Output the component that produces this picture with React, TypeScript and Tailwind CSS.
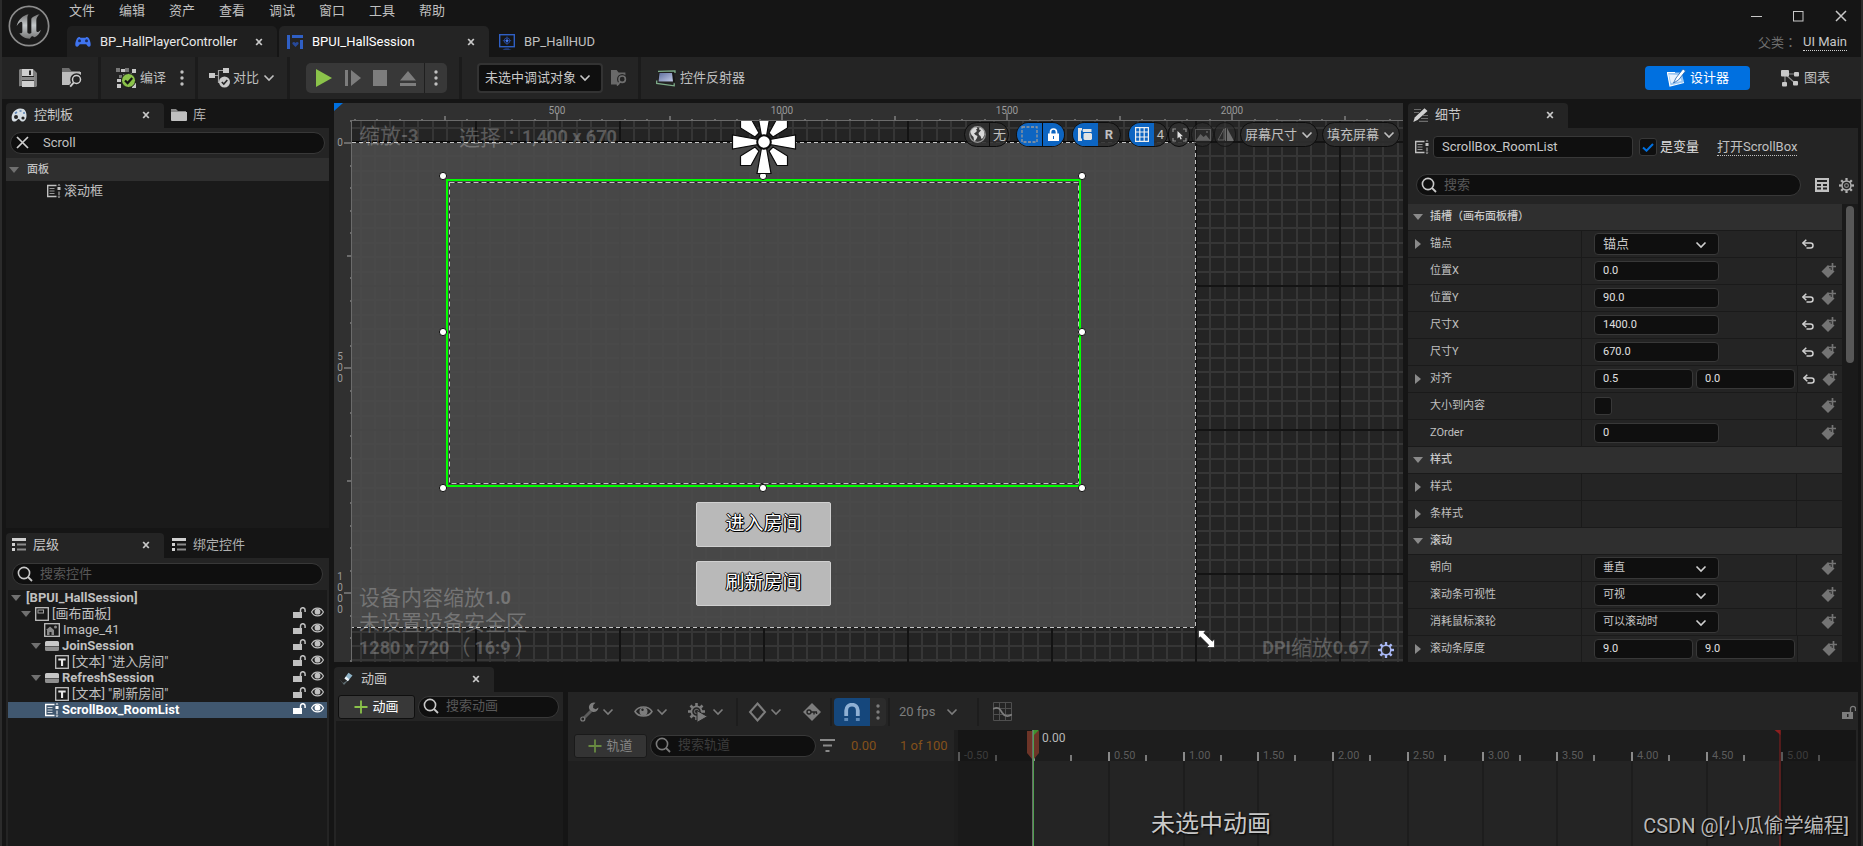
import React from 'react';

type IconProps = { w: number; h: number; vb?: string; className?: string; children: React.ReactNode };

function Icon({ w, h, vb, className = '', children }: IconProps) {
  return (
    <svg width={w} height={h} viewBox={vb ?? `0 0 ${w} ${h}`} className={`shrink-0 ${className}`} fill="none" aria-hidden="true">
      {children}
    </svg>
  );
}

/* ---------- icons ---------- */

const Chevron = ({ className = '' }: { className?: string }) => (
  <Icon w={12} h={8} className={className}>
    <path d="M1.500 1.500 6 6 10.500 1.500" stroke="currentColor" strokeWidth="1.600" />
  </Icon>
);

const Cross = ({ className = '' }: { className?: string }) => (
  <Icon w={8} h={8} className={className}>
    <path d="M1.200 1 6.800 7M6.800 1 1.200 7" stroke="currentColor" strokeWidth="1.800" />
  </Icon>
);

const SearchIcon = ({ className = '' }: { className?: string }) => (
  <Icon w={16} h={16} className={className}>
    <circle cx="7" cy="7" r="5.600" stroke="currentColor" strokeWidth="1.600" />
    <path d="m11 11 4 4" stroke="currentColor" strokeWidth="1.800" />
  </Icon>
);

const Dots = ({ className = '' }: { className?: string }) => (
  <Icon w={4} h={18} className={className}>
    <circle cx="2" cy="3" r="1.700" fill="currentColor" />
    <circle cx="2" cy="9" r="1.700" fill="currentColor" />
    <circle cx="2" cy="15" r="1.700" fill="currentColor" />
  </Icon>
);

const Plus = ({ className = '' }: { className?: string }) => (
  <Icon w={14} h={14} className={className}>
    <path d="M7 .5v13M.5 7h13" stroke="#8bc34a" strokeWidth="1.800" />
  </Icon>
);

const ArrowDown = ({ className = '' }: { className?: string }) => (
  <Icon w={10} h={6} className={className}>
    <path d="M0 0h10L5 6z" fill="currentColor" />
  </Icon>
);

const ArrowRight = ({ className = '' }: { className?: string }) => (
  <Icon w={6} h={10} className={className}>
    <path d="M0 0v10l6-5z" fill="currentColor" />
  </Icon>
);

const EngineLogo = () => (
  <Icon w={42} h={42} vb="0 0 126 126">
    <defs>
      <linearGradient id="metal" x1="0" y1="0" x2="0" y2="1">
        <stop offset="0" stopColor="#777" />
        <stop offset=".45" stopColor="#c4c8ca" />
        <stop offset="1" stopColor="#777" />
      </linearGradient>
    </defs>
    <circle cx="63" cy="63" r="59" fill="#1b1b1b" stroke="#8c8c8c" strokeWidth="5" />
    <g transform="translate(-26 -13)">
      <path
        fill="url(#metal)"
        d="M88 41C70 45 57 57 52 76C58 66 63 63 66 63C68 63 69 65 69 69V93C69 98 64 99 60 97C66 107 77 114 91 114L98 106L106 110C115 105 122 97 125 87C121 92 117 94 114 94C112 94 111 92 111 89V58C111 51 117 45 121 41C112 43 103 47 97 52C96 54 96 56 96 58V97C92 100 84 100 84 93V52C84 47 86 43 88 41Z"
      />
    </g>
  </Icon>
);

const GamepadIcon = () => (
  <Icon w={16} h={12}>
    <path d="M4 1C2 1 .3 5.500 .3 8.800.3 11 2.600 11.500 3.800 9.600L4.800 8.200H11.200L12.200 9.600C13.400 11.500 15.700 11 15.700 8.800 15.700 5.500 14 1 12 1 11 1 10.600 1.800 9.800 1.800H6.200C5.400 1.800 5 1 4 1Z" fill="#3f74f0" />
    <circle cx="4.500" cy="4.800" r="1.500" fill="#1b2c5a" />
    <circle cx="11.500" cy="4.800" r="1.500" fill="#1b2c5a" />
  </Icon>
);

const WidgetIcon = () => (
  <Icon w={16} h={14}>
    <path d="M0 0h3v14H0zM5 0h11v3H5zM13 5h3v9h-3z" fill="#2f5fc4" />
    <path d="M8.500 12 5.500 9c-.8-1.600 1.600-3 3-1 1.400-2 3.800-.6 3 1z" fill="#27499a" />
  </Icon>
);

const HudIcon = () => (
  <Icon w={16} h={16}>
    <rect x=".7" y=".7" width="14.600" height="12" stroke="#2f5fc4" strokeWidth="1.400" />
    <circle cx="8" cy="6.700" r="2.800" stroke="#27499a" />
    <path d="M8 2.500v8.400M3.800 6.700h8.400" stroke="#27499a" />
    <circle cx="8" cy="6.700" r="1.200" fill="#4a7cf0" />
    <path d="M3.500 15.800c2-1.600 7-1.600 9 0z" fill="#27499a" />
  </Icon>
);

const SaveIcon = () => (
  <Icon w={18} h={18}>
    <path d="M1 0h13l4 4v13l-1 1H1l-1-1V1z" fill="#7e7e7e" />
    <path d="M3 0h11v7H3zM3 12h12v6H3z" fill="#cfcfcf" />
    <path d="M10 1.500h2V6h-2z" fill="#242424" />
    <path d="M2 7.500h14v3.500H2z" fill="#8a8a8a" />
    <path d="M0 17h3v1H1zM3 7h12v1H3zM3 11.300h12v.7H3z" fill="#242424" />
  </Icon>
);

const BrowseIcon = () => (
  <Icon w={20} h={20}>
    <path d="M0 0h7l2.500 3H18v3H0z" fill="#6e6e6e" />
    <path d="M0 4h19v9l-8 4H0z" fill="#bdbdbd" />
    <circle cx="14.500" cy="11.500" r="4.300" fill="#242424" stroke="#242424" strokeWidth="4" />
    <path d="m11.500 15-3.500 4" stroke="#242424" strokeWidth="4" />
    <circle cx="14.500" cy="11.500" r="4" stroke="#cfcfcf" strokeWidth="1.500" />
    <path d="m11.700 14.700-3.500 4" stroke="#cfcfcf" strokeWidth="1.800" />
  </Icon>
);

const CompileIcon = () => (
  <Icon w={20} h={20}>
    <path d="M5 1h4v3H5zM16 1h4v4h-4zM1 11h4v3H1zM1 16h4v4H1zM16 15h4v5h-4z" fill="#c6c6c6" />
    <path d="M0 0h4v4H0zM9 0h4v4H9zM7 6h4v3H7zM3 7h3v3H3zM12 5h4v3h-4z" fill="#777" />
    <circle cx="12.500" cy="12.500" r="7" fill="#8bc34a" stroke="#1a1a1a" />
    <path d="m9 12.500 2.600 2.600 4.600-5" stroke="#151515" strokeWidth="2.200" />
  </Icon>
);

const DiffIcon = () => (
  <Icon w={22} h={20}>
    <path d="M6 7.500h3.500V2.500H14M9.500 7.500v7H11" stroke="#a0a0a0" strokeWidth="1.200" />
    <path d="M0 5h6v5H0zM14 0h6v5h-6z" fill="#c8c8c8" />
    <circle cx="15.500" cy="14" r="5.500" fill="#c8c8c8" />
    <path d="m12.800 14 2 2 3.500-4" stroke="#242424" strokeWidth="1.600" />
  </Icon>
);

const ReflectorIcon = () => (
  <Icon w={20} h={17}>
    <defs>
      <linearGradient id="screen" x1="0" y1="0" x2="1" y2="1">
        <stop offset="0" stopColor="#5f6f9e" />
        <stop offset="1" stopColor="#c3cbe8" />
      </linearGradient>
    </defs>
    <path d="M2 1.300 19 .8V3M.7 10.500v3l17.500 2.300v-2.500" stroke="#7fae8a" strokeWidth="1.300" />
    <path d="M3 2.500h15l1 9.500H2z" fill="#161616" />
    <path d="M3.500 3h12.500l1 8.500H2.500z" fill="url(#screen)" />
  </Icon>
);

const DesignerIcon = () => (
  <Icon w={20} h={18}>
    <path d="M1 3.500h14.500L18 13 4 17z" fill="#9cc7f3" />
    <path d="M3 5.500 13 6l2.500 6L5 14z" fill="#e8f3ff" />
    <path d="M1 3.500h8M1.500 3.500 4 17l14-3.500" stroke="#fff" strokeWidth="1.200" />
    <path d="m17 0 2.500 2-7 9-5 3 2.500-5z" fill="#fff" stroke="#1c5fae" strokeWidth=".8" />
  </Icon>
);

const GraphIcon = () => (
  <Icon w={18} h={17}>
    <path d="M5 4h10M5 5l9 8M4 5v8" stroke="#8f8f8f" strokeWidth="1.200" />
    <rect width="8" height="6.500" rx="1" fill="#c8c8c8" />
    <rect x="13" y="2" width="5" height="4.500" rx="1" fill="#c8c8c8" />
    <rect x="1" y="12" width="5" height="4.500" rx="1" fill="#c8c8c8" />
    <rect x="12" y="11" width="5" height="4.500" rx="1" fill="#c8c8c8" />
  </Icon>
);

const PaletteIcon = () => (
  <Icon w={16} h={14}>
    <path d="M1 12C-.5 7 3 1 9 .5c5-.3 6.500 3.500 6.500 7C15.500 11 14 13.500 11.500 13.500S9 11 7.500 11 6 13.500 4 13.500 1.500 13 1 12Z" fill="#d5dde3" />
    <circle cx="5" cy="9" r="2" fill="#242424" />
    <circle cx="12" cy="10" r="1.600" fill="#242424" />
    <path d="M4 5.500 6 4M8.500 3h2M12 5h2" stroke="#5f87b8" strokeWidth="1.600" />
  </Icon>
);

const FolderIcon = () => (
  <Icon w={16} h={12}>
    <path d="M0 0h5l2 2h8v1H0z" fill="#8a8a8a" />
    <path d="M0 3h16v8a1 1 0 0 1-1 1H1a1 1 0 0 1-1-1z" fill="#c0c0c0" />
  </Icon>
);

const ListIcon = () => (
  <Icon w={15} h={13}>
    <path d="M1 0h14v3H1zM1 5h3v3H1zM1 10h3v3H1z" fill="#d0d0d0" />
    <path d="M6 5.500h9v2H6zM6 10.500h9v2H6z" fill="#8a8a8a" />
  </Icon>
);

const ScrollBoxIcon = () => (
  <Icon w={14} h={14}>
    <path d="M9.500 1.500H.7v11h8.800" stroke="currentColor" strokeWidth="1.400" />
    <path d="M2.500 4.500h5M2.500 7h5M2.500 9.500h5" stroke="currentColor" opacity=".75" />
    <path d="M12 0l1.500 1.500h-3zM12 14l1.500-1.500h-3zM10.500 3h3v3h-3zM11.500 7.500h1v4h-1z" fill="currentColor" />
  </Icon>
);

const PencilIcon = () => (
  <Icon w={15} h={14}>
    <path d="M1 1.500h7M1 4.500h5M10 7.500h5M8 10.500h7M6 13.300h9" stroke="#6c6c6c" strokeWidth="1.200" />
    <path d="m11.500.3 3 2.700L4.500 12 .3 14l1.400-4.500z" fill="#d0d0d0" />
  </Icon>
);

const AnimIcon = () => (
  <Icon w={15} h={14}>
    <path d="m0 6.500 4 4.500 6-3.500L5 13z" fill="#5d6b70" />
    <path d="m9.500.8 4 2.700L9 9 5.500 6.200z" fill="#8fb4c8" />
    <path d="m7 4.500 3.300 2.700-1.500 2L5.500 6.500z" fill="#f0f6fa" />
  </Icon>
);

const UnlockIcon = ({ className = '' }: { className?: string }) => (
  <Icon w={13} h={11} className={className}>
    <path d="M7.500 5V3a2.300 2.300 0 0 1 4.600 0v2" stroke="currentColor" strokeWidth="1.500" />
    <path d="M0 5h9v6H0z" fill="currentColor" />
  </Icon>
);

const EyeIcon = ({ className = '' }: { className?: string }) => (
  <Icon w={13} h={10} className={className}>
    <path d="M.6 5C3-.2 10-.2 12.400 5 10 10.200 3 10.200.6 5Z" stroke="currentColor" strokeWidth="1.200" />
    <circle cx="6.500" cy="4.700" r="2.900" fill="currentColor" />
  </Icon>
);

const CanvasIcon = () => (
  <Icon w={14} h={14}>
    <rect x=".7" y=".7" width="12.600" height="12.600" stroke="#c0c0c0" strokeWidth="1.300" />
    <rect x="3" y="3" width="5.500" height="3" stroke="#a0a0a0" />
  </Icon>
);

const ImageIcon = () => (
  <Icon w={16} h={14}>
    <rect x=".7" y=".7" width="14.600" height="12.600" stroke="#c0c0c0" strokeWidth="1.300" />
    <path d="M2 7l4-3.500L10 7v5H7.500V9h-2v3H3V7z" fill="#8a8a8a" />
    <circle cx="11.500" cy="4" r="1.500" fill="#8a8a8a" />
  </Icon>
);

const ButtonIcon = () => (
  <Icon w={14} h={10}>
    <path d="M1.500 0h11A1.500 1.500 0 0 1 14 1.500V5H0V1.500A1.500 1.500 0 0 1 1.500 0Z" fill="#c8c8c8" />
    <path d="M0 5.500h14v3a1.500 1.500 0 0 1-1.500 1.500h-11A1.500 1.500 0 0 1 0 8.500z" fill="#8f8f8f" />
  </Icon>
);

const TextIcon = () => (
  <Icon w={14} h={14}>
    <rect x=".7" y=".7" width="12.600" height="12.600" stroke="#c0c0c0" strokeWidth="1.300" />
    <path d="M3.300 3.500h7.400v2h-2.600V11H6V5.500H3.300z" fill="#e8e8e8" />
  </Icon>
);

const gearTeeth = [0, 45, 90, 135, 180, 225, 270, 315];

const GearIcon = ({ size = 15, className = '', hub = false }: { size?: number; className?: string; hub?: boolean }) => (
  <Icon w={size} h={size} vb="-8 -8 16 16" className={className}>
    {gearTeeth.map((a) => (
      <path key={a} d="M-1.200-8h2.400v3h-2.400z" fill="currentColor" transform={`rotate(${a})`} />
    ))}
    <circle r="4.800" stroke="currentColor" strokeWidth="1.600" />
    {hub && <circle r="2" stroke="currentColor" strokeWidth="1.200" opacity=".7" />}
  </Icon>
);

const ResetIcon = () => (
  <Icon w={12} h={10}>
    <path d="M4.300.8.900 4l3.400 3.200" stroke="#d0d0d0" strokeWidth="1.500" />
    <path d="M1 4h7.500a2.400 2.400 0 0 1 0 5H4.500" stroke="#d0d0d0" strokeWidth="1.500" />
  </Icon>
);

const AddKeyIcon = () => (
  <Icon w={15} h={15}>
    <path d="M7 2 13.500 8.500 7 15 .5 8.500z" fill="#747474" />
    <path d="M11.500 0v7M8 3.500h7" stroke="#242424" strokeWidth="3.500" />
    <path d="M11.500 0v7M8 3.500h7" stroke="#747474" strokeWidth="1.700" />
  </Icon>
);

/* ---------- shared controls ---------- */

function DockTab({ icon, label, width }: { icon: React.ReactNode; label: string; width: string }) {
  return (
    <div className={`flex h-[25px] items-center gap-[7px] rounded-t-[4px] bg-[#242424] pr-3.5 pb-0.5 pl-[5px] ${width}`}>
      {icon}
      <span className="flex-1 text-[#c8c8c8]">{label}</span>
      <button aria-label={`关闭${label}`} className="text-[#c8c8c8]">
        <Cross />
      </button>
    </div>
  );
}

function SearchBox({ id, label, className = '', dim = false }: { id: string; label: string; className?: string; dim?: boolean }) {
  return (
    <div className={`flex h-[22px] items-center gap-[7px] rounded-full border border-[#383838] bg-[#0f0f0f] pr-2 pb-px pl-1 ${className}`}>
      <label htmlFor={id} aria-label={label}>
        <SearchIcon className={dim ? 'text-[#7a7a7a]' : 'text-[#c8c8c8]'} />
      </label>
      <input
        id={id}
        placeholder={label}
        className={`w-full min-w-0 bg-transparent outline-none ${dim ? 'placeholder:text-[#3c3c3c]' : 'placeholder:text-[#585858]'}`}
      />
    </div>
  );
}

/* full-width colon with its dots in the middle of the cell */
const Colon = () => <span className="font-['Noto_Sans_CJK_TC',sans-serif]">：</span>;

/* ---------- title bar ---------- */

const menus = ['文件', '编辑', '资产', '查看', '调试', '窗口', '工具', '帮助'];

function DocTab({ icon, label, state, width }: { icon: React.ReactNode; label: string; state: 'active' | 'open' | 'plain'; width: string }) {
  const bg = state === 'active' ? 'bg-[#242424] text-white' : state === 'open' ? 'bg-[#1f1f1f] text-[#e8e8e8]' : 'text-[#c0c0c0]';
  return (
    <div className={`flex h-[31px] items-center gap-[9px] rounded-t-[5px] pr-3.5 pl-2 ${bg} ${width}`}>
      {icon}
      <span className="flex-1 whitespace-nowrap">{label}</span>
      {state !== 'plain' && (
        <button aria-label={`关闭${label}`} className="text-[#c8c8c8]">
          <Cross />
        </button>
      )}
    </div>
  );
}

function TitleBar() {
  return (
    <header className="flex h-[57px] shrink-0 bg-[#151515]">
      <div className="w-[65px] shrink-0 pt-[5px] pl-[6px]">
        <EngineLogo />
      </div>
      <div className="flex flex-1 flex-col justify-between">
        <nav className="flex gap-6 pt-0.5 pl-0.5 leading-[18px] text-[#c0c0c0]">
          {menus.map((m) => (
            <button key={m}>{m}</button>
          ))}
        </nav>
        <div className="flex gap-0.5">
          <DocTab icon={<GamepadIcon />} label="BP_HallPlayerController" state="open" width="w-[210px]" />
          <DocTab icon={<WidgetIcon />} label="BPUI_HallSession" state="active" width="w-[210px]" />
          <DocTab icon={<HudIcon />} label="BP_HallHUD" state="plain" width="w-[140px]" />
        </div>
      </div>
      <div className="flex flex-col items-end justify-between pt-[10px] pr-3.5 pb-[6px]">
        <div className="flex items-center gap-[31px] text-[#c8c8c8]">
          <button aria-label="最小化">
            <Icon w={11} h={12}>
              <path d="M0 6.500h11" stroke="currentColor" />
            </Icon>
          </button>
          <button aria-label="最大化">
            <Icon w={11} h={12}>
              <rect x=".5" y="1.500" width="9.500" height="9.500" stroke="currentColor" />
            </Icon>
          </button>
          <button aria-label="关闭">
            <Icon w={12} h={12}>
              <path d="m1 1 10 10M11 1 1 11" stroke="currentColor" strokeWidth="1.500" />
            </Icon>
          </button>
        </div>
        <div className="flex items-center gap-[6px] leading-[17px]">
          <span className="text-[#6e6e6e]">
            父类
            <Colon />
          </span>
          <a href="#parent" className="border-b border-dotted border-[#d0d0d0] leading-4 text-[#c8c8c8]">
            UI Main
          </a>
        </div>
      </div>
    </header>
  );
}

/* ---------- tool bar ---------- */

function ToolBar() {
  const group = 'flex h-full items-center border-r-[3px] border-[#1b1b1b]';
  return (
    <div className="flex h-[42px] shrink-0 items-center bg-[#242424] text-[#c0c0c0]">
      <div className={`${group} gap-[25px] pr-4 pl-[17px]`}>
        <button aria-label="保存">
          <SaveIcon />
        </button>
        <button aria-label="浏览">
          <BrowseIcon />
        </button>
      </div>
      <div className={`${group} gap-[14px] pr-[11px] pl-[15px]`}>
        <button className="flex items-center gap-1">
          <CompileIcon />
          编译
        </button>
        <button aria-label="编译选项">
          <Dots />
        </button>
      </div>
      <div className={`${group} pr-3 pl-[11px]`}>
        <button className="flex items-center gap-0.5">
          <DiffIcon />
          对比
          <Chevron className="ml-0.5" />
        </button>
      </div>
      <div className={`${group} pr-3 pl-4`}>
        <div className="flex h-[30px] items-center rounded-[5px] bg-[#383838]">
          <button aria-label="运行" className="pr-[13px] pl-2.5">
            <Icon w={16} h={18}>
              <path d="M0 0v18l16-9z" fill="#8bc34a" />
            </Icon>
          </button>
          <button aria-label="逐帧" className="pr-3">
            <Icon w={16} h={16}>
              <path d="M0 0h3v16H0zM6 0v16l10-8z" fill="#7d7d7d" />
            </Icon>
          </button>
          <button aria-label="停止" className="pr-3">
            <Icon w={15} h={16}>
              <path d="M0 0h14v16H0z" fill="#7d7d7d" />
            </Icon>
          </button>
          <button aria-label="弹出" className="pr-2">
            <Icon w={16} h={15}>
              <path d="m8 0 8 9.500H0zM0 12h16v3H0z" fill="#7d7d7d" />
            </Icon>
          </button>
          <button aria-label="运行选项" className="flex h-full items-center border-l border-[#1f1f1f] px-[9px]">
            <Dots />
          </button>
        </div>
      </div>
      <div className={`${group} gap-2 pr-[11px] pl-[15px]`}>
        <div className="relative">
          <select
            aria-label="调试对象"
            className="h-[30px] w-[126px] appearance-none rounded-[4px] border-2 border-[#333] bg-[#0f0f0f] pr-5 pl-[6px] text-[#c8c8c8]"
          >
            <option>未选中调试对象</option>
          </select>
          <Chevron className="pointer-events-none absolute top-[11px] right-3 text-[#c8c8c8]" />
        </div>
        <button aria-label="查找" className="opacity-40">
          <Icon w={16} h={16} vb="0 0 20 20">
            <path d="M0 0h7l2.500 3H18v10l-8 5H0z" fill="#d0d0d0" />
            <circle cx="14" cy="11.500" r="4" fill="#242424" stroke="#242424" strokeWidth="5" />
            <circle cx="14" cy="11.500" r="4" stroke="#e0e0e0" strokeWidth="2" />
            <path d="m11 15-3.500 4.500" stroke="#e0e0e0" strokeWidth="2" />
          </Icon>
        </button>
      </div>
      <button className="flex items-center gap-1 pl-[15px]">
        <ReflectorIcon />
        控件反射器
      </button>
      <div className="flex-1" />
      <button className="flex h-6 w-[105px] items-center justify-center gap-1 rounded-[4px] bg-[#0070e0] text-white">
        <DesignerIcon />
        设计器
      </button>
      <button className="flex items-center gap-[5px] pr-[31px] pl-[31px]">
        <GraphIcon />
        图表
      </button>
    </div>
  );
}

/* ---------- left column ---------- */

function PalettePanel() {
  return (
    <section className="flex min-h-0 flex-1 flex-col">
      <div className="flex items-center">
        <DockTab icon={<PaletteIcon />} label="控制板" width="w-[158px]" />
        <button className="flex items-center gap-[6px] pb-0.5 pl-[7px] text-[#b0b0b0]">
          <FolderIcon />库
        </button>
      </div>
      <div className="bg-[#242424] p-1">
        <div className="flex h-[22px] items-center rounded-full border border-[#383838] bg-[#0f0f0f] pb-px pl-[5px]">
          <button aria-label="清除" className="text-[#d0d0d0]">
            <Icon w={13} h={13}>
              <path d="m1 1 11 11M12 1 1 12" stroke="currentColor" strokeWidth="1.700" />
            </Icon>
          </button>
          <input aria-label="搜索面板" defaultValue="Scroll" className="w-full bg-transparent pl-[14px] text-[#c0c0c0] outline-none" />
        </div>
      </div>
      <div className="flex-1 bg-[#1a1a1a]">
        <button className="flex h-[23px] w-full items-center gap-2 bg-[#2f2f2f] pl-[3px] text-[11px] font-medium text-[#c0c0c0]">
          <ArrowDown className="text-[#707070]" />
          面板
        </button>
        <div className="flex h-5 items-center gap-[3px] pl-[41px] text-[#c0c0c0]">
          <ScrollBoxIcon />
          滚动框
        </div>
      </div>
    </section>
  );
}

type TreeRow = { pad: string; arrow?: boolean; icon?: React.ReactNode; label: string; bold?: boolean; root?: boolean; selected?: boolean };

const tree: TreeRow[] = [
  { pad: 'pl-[3px]', arrow: true, label: '[BPUI_HallSession]', bold: true, root: true },
  { pad: 'pl-[13px]', arrow: true, icon: <CanvasIcon />, label: '[画布面板]' },
  { pad: 'pl-[36px]', icon: <ImageIcon />, label: 'Image_41' },
  { pad: 'pl-[23px]', arrow: true, icon: <ButtonIcon />, label: 'JoinSession', bold: true },
  { pad: 'pl-[47px]', icon: <TextIcon />, label: '[文本] "进入房间"' },
  { pad: 'pl-[23px]', arrow: true, icon: <ButtonIcon />, label: 'RefreshSession', bold: true },
  { pad: 'pl-[47px]', icon: <TextIcon />, label: '[文本] "刷新房间"' },
  { pad: 'pl-[37px]', icon: <ScrollBoxIcon />, label: 'ScrollBox_RoomList', bold: true, selected: true },
];

function HierarchyPanel() {
  return (
    <section className="flex h-[313px] shrink-0 flex-col">
      <div className="flex items-center">
        <DockTab icon={<ListIcon />} label="层级" width="w-[158px]" />
        <button className="flex items-center gap-[7px] pb-0.5 pl-[7px] text-[#b0b0b0]">
          <ListIcon />
          绑定控件
        </button>
      </div>
      <div className="flex flex-1 flex-col bg-[#242424] px-0.5">
        <SearchBox id="widget-search" label="搜索控件" className="mx-1 my-[5px]" />
        <ul className="flex-1 bg-[#1a1a1a]">
          {tree.map((r) => (
            <li
              key={r.label}
              className={`flex h-4 items-center pr-[3px] leading-4 ${r.pad} ${r.selected ? 'bg-[#40576f] text-white' : 'text-[#c0c0c0]'}`}
            >
              {r.arrow && <ArrowDown className={`text-[#707070] ${r.root ? 'mr-[5px]' : 'mr-1'}`} />}
              {r.icon}
              <span className={`flex-1 whitespace-nowrap ${r.root ? '' : 'ml-[3px]'} ${r.bold ? 'font-bold' : ''}`}>{r.label}</span>
              {!r.root && (
                <span className="flex items-center gap-[5px] pb-1">
                  <button aria-label={`锁定${r.label}`}>
                    <UnlockIcon />
                  </button>
                  <button aria-label={`${r.label}可见性`}>
                    <EyeIcon />
                  </button>
                </span>
              )}
            </li>
          ))}
        </ul>
      </div>
    </section>
  );
}

/* ---------- designer surface ---------- */

const SCALE = 0.45;
const ORIGIN_X = -2;
const ORIGIN_Y = 39;
const unitX = (u: number) => ORIGIN_X + u * SCALE;
const unitY = (u: number) => ORIGIN_Y + u * SCALE;
const ticksX = Array.from({ length: 110 }, (_, i) => (i + 1) * 50);
const ticksY = Array.from({ length: 60 }, (_, i) => (i - 1) * 50);
const minorLines = Array.from({ length: 9 }, (_, i) => Math.round((i + 1) * 14.4));
const handles = [
  [109, 73],
  [429, 73],
  [748, 73],
  [109, 229],
  [748, 229],
  [109, 385],
  [429, 385],
  [748, 385],
];

function tickLength(u: number) {
  if (u % 500 === 0) return 8;
  return u % 250 === 0 ? 5 : 2;
}

function DesignSurface() {
  return (
    <svg className="absolute inset-0 h-full w-full" aria-label="画布">
      <defs>
        <pattern id="grid" x={ORIGIN_X - 1} y={ORIGIN_Y - 1} width="144" height="144" patternUnits="userSpaceOnUse">
          <rect width="144" height="144" fill="#242424" />
          {minorLines.map((m) => (
            <path key={m} d={`M${m} 0h2v144h-2zM0 ${m}h144v2H0z`} fill="#363636" />
          ))}
          <path d="M0 0h144v2H0zM0 0h2v144H0z" fill="#131313" />
        </pattern>
      </defs>
      <rect width="100%" height="100%" fill="url(#grid)" />
      <rect x="18" y="39" width="844" height="486" fill="#4b4b4b" fillOpacity=".92" />
      <path d="M18 38.500h844" stroke="#050505" />
      <path d="M18 39.500H861.500V524.500H18" stroke="#1a1a1a" fill="none" />
      <path d="M18 39.500H861.500V524.500H18" stroke="#c4c4c4" strokeDasharray="4 3" fill="none" />

      <rect x="115.500" y="79.500" width="629" height="301" stroke="#1d1d1d" fill="none" />
      <rect x="115.500" y="79.500" width="629" height="301" stroke="#c4c4c4" strokeDasharray="5 3" fill="none" />
      <rect x="113" y="77" width="633" height="306" stroke="#00ff00" strokeWidth="2" fill="none" />

      {handles.map(([x, y]) => (
        <circle key={`${x}-${y}`} cx={x} cy={y} r="3.600" fill="#fff" stroke="#111" />
      ))}

      <g transform="translate(430 39)" fill="#fff" stroke="#0a0a0a" strokeWidth="1.200">
        {[0, 90, 180, 270].map((a) => (
          <g key={a} transform={`rotate(${a})`}>
            <path d="M-2.500 6h5L7 31.500H-7z" />
          </g>
        ))}
        {['scale(1 1)', 'scale(-1 1)', 'scale(1 -1)', 'scale(-1 -1)'].map((t) => (
          <path key={t} d="M-9 5-23.500 14v9.500h10.500L-5 9z" transform={t} />
        ))}
        <circle r="6.800" strokeWidth="2" />
      </g>

      <path
        d="M864.500 527.500h7.500l-2.300 2.300 8.500 8.500 2.300-2.300v8.500h-8l2.300-2.300-8.500-8.500-1.800 1.800z"
        stroke="#111"
        strokeWidth=".6"
        fill="#fff"
      />

      <rect width="100%" height="18" fill="#303030" />
      <rect width="18" height="100%" fill="#303030" />
      <path d="M0 0h9L0 8z" fill="#0070e0" />
      <g fill="#6b6b6b">
        <rect x="18" y="17" width="100%" height="1" />
        <rect x="17" y="18" width="1" height="100%" />
        {ticksX.map((u) => (
          <rect key={u} x={Math.round(unitX(u)) - 1} y={18 - tickLength(u)} width="2" height={tickLength(u)} />
        ))}
        {ticksY.map((u) => (
          <rect key={u} x={18 - tickLength(u)} y={Math.round(unitY(u))} width={tickLength(u)} height="2" />
        ))}
      </g>
      <g fill="#9a9a9a" fontSize="10" textAnchor="middle">
        {[500, 1000, 1500, 2000].map((u) => (
          <text key={u} x={Math.round(unitX(u))} y="11">
            {u}
          </text>
        ))}
        {[0, 500, 1000].map((u) => {
          const digits = String(u).split('');
          return digits.map((d, i) => (
            <text key={`${u}-${i}`} x="6" y={Math.round(unitY(u) + 4 + (i - (digits.length - 1) / 2) * 11)}>
              {d}
            </text>
          ));
        })}
      </g>
    </svg>
  );
}

const pill = 'flex h-[25px] items-center justify-center overflow-hidden rounded-full border border-[#0d0d0d] bg-[#303030]/90 text-[#c0c0c0]';

function ViewportBar() {
  return (
    <div className="absolute top-[19px] right-[3px] flex items-center gap-1">
      <div className="flex items-center">
        <div className={`${pill} w-[45px]`}>
          <button aria-label="本地化预览" className="flex h-full flex-1 items-center justify-center">
            <Icon w={17} h={17}>
              <circle cx="8.500" cy="8.500" r="7.800" fill="#3a3a3a" stroke="#8f8f8f" strokeWidth="1.200" />
              <path
                d="M1.500 6C2.500 3 5 1.300 7.500 1.200l1 1.300-1.500 1 1 1.500-1.500 1.500L5 7.500l1.500 1.500 2 1-.5 2-2 3L5 14.500 4.500 11 2.500 9zM10.500 1.500c2 .6 3.700 2 4.500 4l.5 3-1.500 3.500-1.500 1-1-3-1.500-1-.5-2 1.500-1.500 1-1.500-2-.5z"
                fill="#d8d8d8"
              />
            </Icon>
          </button>
          <span className="flex h-full w-[19px] items-center border-l border-[#0d0d0d] pl-[3px]">无</span>
        </div>
        <div className={`${pill} ml-[7px] w-[49px]`}>
          <button aria-label="显示轮廓" className="flex h-full w-[25px] items-center justify-center bg-[#0d65c2]">
            <Icon w={17} h={17}>
              <rect x="1" y="1" width="15" height="15" stroke="#9a9a9a" strokeWidth="1.300" strokeDasharray="3 1.500" />
            </Icon>
          </button>
          <button aria-label="遵循锁定" className="flex h-full flex-1 items-center justify-center border-l border-[#0d0d0d] bg-[#0d65c2] text-white">
            <Icon w={11} h={13}>
              <path d="M2.500 6V4a3 3 0 0 1 6 0v2" stroke="currentColor" strokeWidth="1.700" />
              <path d="M0 5.500h11V13H0z" fill="currentColor" />
              <path d="M5 8h1v3H5z" fill="#0d65c2" />
            </Icon>
          </button>
        </div>
        <div className={`${pill} ml-[7px] w-[49px]`}>
          <button aria-label="布局变换" className="flex h-full w-[25px] items-center justify-center bg-[#0d65c2]">
            <Icon w={15} h={13}>
              <path d="M0 0h4v2L3 3v7l1 1v2H0z" fill="#e4e4e4" />
              <path d="M5 1h8.500v3H5L4.500 2.500zM6.500 5H13l1 1v5l-1 1H6.500l-1-1V6z" fill="#e4e4e4" />
            </Icon>
          </button>
          <button className="h-full flex-1 font-bold">R</button>
        </div>
        <div className={`${pill} ml-[7px] w-[40px]`}>
          <button aria-label="网格对齐" className="flex h-full w-[25px] items-center justify-center bg-[#0d65c2]">
            <Icon w={14} h={15}>
              <path d="M.6.6h12.800v13.800H.6zM4.800 0v15M9.200 0v15M0 5h14M0 10h14" stroke="#f0f0f0" strokeWidth="1.200" />
            </Icon>
          </button>
          <button className="h-full flex-1">4</button>
        </div>
        <button aria-label="缩放到选中项" className={`${pill} w-[22px]`}>
          <Icon w={15} h={14}>
            <path d="M1 4V1h3M11 1h3v3M14 10v3h-3M4 13H1v-3" stroke="#8f8f8f" strokeWidth="1.200" />
            <path d="M5.500 3v7.500l1.800-1.700 1.200 2.700 1.300-.6-1.200-2.600h2.400z" fill="#e0e0e0" />
          </Icon>
        </button>
        <button aria-label="背景图像" className={`${pill} ml-px w-[23px] opacity-60`}>
          <Icon w={16} h={12}>
            <rect x=".5" y=".5" width="15" height="11" stroke="#7a7a7a" />
            <path d="m1 11 4.500-6 3 3L11 6l4 5z" fill="#8a8a8a" />
            <circle cx="12" cy="3" r="1" fill="#8a8a8a" />
          </Icon>
        </button>
        <button aria-label="镜像" className={`${pill} w-[22px] opacity-60`}>
          <Icon w={17} h={13}>
            <path d="M7 .8V12H1z" stroke="#8a8a8a" />
            <path d="M10 0v13h7z" fill="#a0a0a0" />
            <path d="M8.500 0v13" stroke="#8a8a8a" />
          </Icon>
        </button>
      </div>
      {['屏幕尺寸', '填充屏幕'].map((label) => (
        <button key={label} className={`${pill} w-[78px] gap-1`}>
          {label}
          <Chevron />
        </button>
      ))}
    </div>
  );
}

const watermark = 'pointer-events-none absolute flex items-center leading-6 text-[18px] font-bold text-white/25';
const cjk = 'text-[21px] font-normal';

function Viewport() {
  const canvasButton =
    'absolute left-[362px] h-[45px] w-[135px] rounded-[2px] border border-[#d0d0d0] bg-[#b9b9b9] pb-0.5 text-[19px] text-white [text-shadow:1px_0_#000,-1px_0_#000,0_1px_#000,0_-1px_#000,1px_1px_#000]';
  return (
    <section className="relative min-h-0 flex-1 overflow-hidden">
      <DesignSurface />
      <div className={`${watermark} top-[21px] left-[25px]`}>
        <span className={cjk}>缩放</span>
        <span>-3</span>
      </div>
      <div className={`${watermark} top-[21px] left-[125px]`}>
        <span className={cjk}>
          选择
          <Colon />
        </span>
        <span>1,400 x 670</span>
      </div>
      <div className={`${watermark} bottom-[52px] left-[25px]`}>
        <span className={cjk}>设备内容缩放</span>
        <span>1.0</span>
      </div>
      <div className={`${watermark} bottom-[27px] left-[25px]`}>
        <span className={cjk}>未设置设备安全区</span>
      </div>
      <div className={`${watermark} bottom-[2px] left-[25px]`}>
        <span>1280 x 720</span>
        <span className={cjk}>（</span>
        <span className="px-1">16:9</span>
        <span className={cjk}>）</span>
      </div>
      <div className={`${watermark} right-[34px] bottom-[2px]`}>
        <span>DPI</span>
        <span className={cjk}>缩放</span>
        <span>0.67</span>
      </div>
      <button aria-label="DPI设置" className="absolute right-[9px] bottom-[4px] text-[#a9b8f5]">
        <GearIcon size={16} />
      </button>
      <button className={`${canvasButton} top-[399px]`}>进入房间</button>
      <button className={`${canvasButton} top-[458px]`}>刷新房间</button>
      <ViewportBar />
    </section>
  );
}

/* ---------- details ---------- */

type Prop =
  | { kind: 'header'; label: string }
  | { kind: 'text' | 'select' | 'check' | 'none'; label: string; values?: string[]; expandable?: boolean; reset?: boolean; key?: boolean; large?: boolean };

const props: Prop[] = [
  { kind: 'header', label: '插槽（画布面板槽）' },
  { kind: 'select', label: '锚点', values: ['锚点'], expandable: true, reset: true, key: false, large: true },
  { kind: 'text', label: '位置X', values: ['0.0'], key: true },
  { kind: 'text', label: '位置Y', values: ['90.0'], reset: true, key: true },
  { kind: 'text', label: '尺寸X', values: ['1400.0'], reset: true, key: true },
  { kind: 'text', label: '尺寸Y', values: ['670.0'], reset: true, key: true },
  { kind: 'text', label: '对齐', values: ['0.5', '0.0'], expandable: true, reset: true, key: true },
  { kind: 'check', label: '大小到内容', key: true },
  { kind: 'text', label: 'ZOrder', values: ['0'], key: true },
  { kind: 'header', label: '样式' },
  { kind: 'none', label: '样式', expandable: true },
  { kind: 'none', label: '条样式', expandable: true },
  { kind: 'header', label: '滚动' },
  { kind: 'select', label: '朝向', values: ['垂直'], key: true },
  { kind: 'select', label: '滚动条可视性', values: ['可视'], key: true },
  { kind: 'select', label: '消耗鼠标滚轮', values: ['可以滚动时'], key: true },
  { kind: 'text', label: '滚动条厚度', values: ['9.0', '9.0'], expandable: true, key: true },
];

function PropRow({ p, index }: { p: Prop; index: number }) {
  if (p.kind === 'header') {
    return (
      <button className="flex h-[27px] w-full items-center gap-[7px] border-b border-[#1a1a1a] bg-[#2f2f2f] pl-[5px] font-medium text-[#c8c8c8]">
        <ArrowDown className="text-[#8a8a8a]" />
        {p.label}
      </button>
    );
  }
  const id = `prop-${index}`;
  const values = p.values ?? [];
  return (
    <div className="grid h-[27px] grid-cols-[174px_1fr_45px] border-b border-[#1a1a1a]">
      <div className="flex items-center border-r border-[#1a1a1a] pl-[7px]">
        <span className="w-[15px]">{p.expandable && <ArrowRight className="text-[#8a8a8a]" />}</span>
        {p.kind === 'none' ? (
          <span className="text-[#c0c0c0]">{p.label}</span>
        ) : (
          <label htmlFor={id} className="text-[#c0c0c0]">
            {p.label}
          </label>
        )}
      </div>
      <div className="flex items-center gap-[3px] border-r border-[#1a1a1a] pr-0.5 pl-3">
        {p.kind === 'text' &&
          values.map((v, i) => (
            <input
              key={i}
              id={i === 0 ? id : `${id}-${i}`}
              aria-label={i === 0 ? undefined : `${p.label} ${i + 1}`}
              defaultValue={v}
              className={`h-5 rounded-[4px] border border-[#383838] bg-[#0f0f0f] px-2 pb-0.5 text-[#e0e0e0] ${values.length > 1 ? 'w-[99px]' : 'w-[125px]'}`}
            />
          ))}
        {p.kind === 'select' && (
          <div className="relative">
            <select
              id={id}
              className={`h-[22px] w-[125px] appearance-none rounded-[4px] border border-[#383838] bg-[#0f0f0f] px-2 pb-px text-[#c8c8c8] ${p.large ? 'text-[13px]' : ''}`}
            >
              <option>{values[0]}</option>
            </select>
            <Chevron className="pointer-events-none absolute top-[8px] right-3 text-[#d0d0d0]" />
          </div>
        )}
        {p.kind === 'check' && <input id={id} type="checkbox" className="size-[18px] appearance-none rounded-[3px] border border-[#383838] bg-[#0f0f0f]" />}
      </div>
      <div className="flex items-center pl-[5px]">
        <span className="w-[19px]">
          {p.reset && (
            <button aria-label={`重置${p.label}`} className="block">
              <ResetIcon />
            </button>
          )}
        </span>
        {p.key && (
          <button aria-label={`添加${p.label}关键帧`} className="pb-0.5">
            <AddKeyIcon />
          </button>
        )}
      </div>
    </div>
  );
}

function DetailsPanel() {
  return (
    <section className="flex w-[450px] shrink-0 flex-col">
      <DockTab icon={<PencilIcon />} label="细节" width="w-[160px]" />
      <div className="flex min-h-0 flex-1 flex-col bg-[#242424]">
        <div className="flex h-[38px] shrink-0 items-center pl-[7px]">
          <span className="text-[#c0c0c0]">
            <ScrollBoxIcon />
          </span>
          <input
            aria-label="控件名称"
            defaultValue="ScrollBox_RoomList"
            className="ml-1 h-[22px] w-[200px] rounded-[4px] border border-[#383838] bg-[#0f0f0f] px-2 pb-0.5 text-[#c8c8c8]"
          />
          <label className="ml-[6px] flex items-center gap-[3px] text-[#e0e0e0]">
            <span className="relative flex size-[18px]">
              <input type="checkbox" defaultChecked className="size-[18px] appearance-none rounded-[3px] border border-[#383838] bg-[#0f0f0f]" />
              <Icon w={12} h={9} className="pointer-events-none absolute top-[5px] left-[3px]">
                <path d="m1 4.500 3.500 3.200L11 1" stroke="#0070e0" strokeWidth="2" />
              </Icon>
            </span>
            是变量
          </label>
          <a href="#scrollbox" className="ml-[18px] border-b border-dotted border-[#c0c0c0] leading-4 text-[#c0c0c0]">
            打开ScrollBox
          </a>
        </div>
        <div className="flex h-[38px] shrink-0 items-center pr-1 pl-2">
          <SearchBox id="detail-search" label="搜索" className="flex-1" />
          <button aria-label="表格视图" className="ml-3.5 text-[#c0c0c0]">
            <Icon w={14} h={14}>
              <path d="M0 0h14v14H0z" fill="currentColor" />
              <path d="M2 3h10M2 7h4M8 7h4M2 10.500h4M8 10.500h4" stroke="#242424" strokeWidth="1.800" />
            </Icon>
          </button>
          <button aria-label="设置" className="ml-2.5 text-[#b0b0b0]">
            <GearIcon size={15} hub />
          </button>
        </div>
        <div className="flex min-h-0 flex-1 text-[11px]">
          <div className="flex-1 overflow-hidden">
            {props.map((p, i) => (
              <PropRow key={i} p={p} index={i} />
            ))}
          </div>
          <div className="w-4 bg-[#1a1a1a] pt-0.5 pl-1">
            <div className="h-[157px] w-2 rounded-full bg-[#575757]" />
          </div>
        </div>
      </div>
    </section>
  );
}

/* ---------- animation panel ---------- */

const PX_PER_SEC = 149.5;
const ZERO = 75;
const END = ZERO + 5 * PX_PER_SEC;
const marks = Array.from({ length: 12 }, (_, i) => i / 2 - 0.5);

function Timeline() {
  return (
    <svg className="block h-full w-full" aria-label="时间轴">
      <rect width="100%" height="100%" fill="#242424" />
      <rect width="100%" height="31" fill="#1d1d1d" />
      {marks.map((s) => {
        const x = Math.round(ZERO + s * PX_PER_SEC);
        return (
          <g key={s}>
            {s > 0 && <rect x={x} y="31" width="2" height="100%" fill="#1d1d1d" />}
            <rect x={x} y="22" width="2" height="9" fill="#8a8a8a" />
            <rect x={x + 37} y="25" width="2" height="6" fill="#7a7a7a" />
            {s !== 0 && (
              <text x={x + 6} y="29" fontSize="11" fill="#5c5c5c">
                {s.toFixed(2)}
              </text>
            )}
          </g>
        );
      })}
      <rect width={ZERO} height="100%" fill="#0c0c0c" fillOpacity=".4" />
      <rect x={END} width="100%" height="100%" fill="#0c0c0c" fillOpacity=".4" />
      <path d={`M${END - 6} 0h6v5z`} fill="#8c1f1f" />
      <rect x={END - 1} width="1" height="100%" fill="#8c1f1f" />
      <path d={`M${ZERO - 6} 1h12v22l-5 6h-2l-5-6z`} fill="#6d3427" />
      <path d={`M${ZERO} 0h6l-5 5z`} fill="#3f8f2f" />
      <rect x={ZERO - 1} y="0" width="1" height="100%" fill="#6b6b6b" />
      <rect x={ZERO} y="0" width="1" height="100%" fill="#4fa04f" />
      <text x={ZERO + 9} y="12" fontSize="12" fill="#b8b8b8">
        0.00
      </text>
    </svg>
  );
}

function SequencerBar() {
  const drop = 'flex items-center gap-[3px]';
  const sep = 'h-7 w-0.5 bg-[#1d1d1d]';
  return (
    <div className="flex h-[38px] shrink-0 items-center bg-[#242424] pt-px pr-0.5 pl-3 text-[#7d7d7d]">
      <button aria-label="操作" className={drop}>
        <Icon w={19} h={20}>
          <path d="M3 17 11 9" stroke="#5c5c5c" strokeWidth="3" />
          <circle cx="2.800" cy="17" r="2" stroke="currentColor" strokeWidth="1.200" fill="#242424" />
          <path d="M15.500.8a4.800 4.800 0 1 0 3 4.700l-2.800 1.700-2.600-1.300.2-2.900z" fill="currentColor" />
        </Icon>
        <Chevron />
      </button>
      <button aria-label="视图" className={`${drop} ml-5`}>
        <Icon w={19} h={13}>
          <path d="M1 6.500C4.500.5 14.500.5 18 6.500 14.500 12.500 4.500 12.500 1 6.500Z" stroke="currentColor" strokeWidth="1.500" />
          <circle cx="9.500" cy="6.500" r="4" fill="currentColor" />
          <circle cx="8.500" cy="4.800" r="1.200" fill="#242424" />
        </Icon>
        <Chevron />
      </button>
      <button aria-label="播放选项" className={`${drop} ml-5`}>
        <span className="relative">
          <GearIcon size={17} hub />
          <Icon w={12} h={13} className="absolute top-[7px] left-2">
            <path d="M1 .5v12l10.500-6z" fill="currentColor" stroke="#242424" />
          </Icon>
        </span>
        <Chevron className="ml-1" />
      </button>
      <div className={`${sep} mr-2.5 ml-3`} />
      <button aria-label="关键帧" className={drop}>
        <Icon w={19} h={20}>
          <path d="M9.500 1.500 17 10 9.500 18.500 2 10z" stroke="currentColor" strokeWidth="2" />
        </Icon>
        <Chevron />
      </button>
      <button aria-label="自动关键帧" className="ml-[21px]">
        <Icon w={18} h={18}>
          <path d="m9 0 9 9-9 9-9-9z" fill="currentColor" />
          <circle cx="6" cy="9" r="2" stroke="#242424" strokeWidth="1.400" />
          <path d="M8 9h6M11 9v2.500M13.500 9v2" stroke="#242424" strokeWidth="1.400" />
        </Icon>
      </button>
      <div className={`${sep} mr-0.5 ml-[9px]`} />
      <button aria-label="吸附" className="flex h-7 w-9 items-center justify-center rounded-l-[4px] bg-[#15477c]">
        <Icon w={16} h={18}>
          <path d="M2.200 13V7.500a5.800 5.800 0 0 1 11.600 0V13" stroke="#8fb0d4" strokeWidth="3.800" />
          <path d="M.300 15h3.800v3H.3zM11.900 15h3.800v3h-3.800z" fill="#5f8ab8" />
        </Icon>
      </button>
      <button aria-label="吸附选项" className="flex h-7 w-4 items-center justify-center rounded-r-[4px] bg-[#2b2b2b]">
        <Dots />
      </button>
      <div className={`${sep} mr-[9px] ml-0.5`} />
      <button className="flex items-center gap-[11px]">
        20 fps
        <Chevron />
      </button>
      <div className={`${sep} mr-3.5 ml-[19px]`} />
      <button aria-label="曲线编辑器">
        <Icon w={19} h={19}>
          <path d="M.5.5h18v18H.5zM6.500 0v19M12.500 0v19M0 6.500h19M0 12.500h19" stroke="#4f4f4f" />
          <path d="M0 7c5-3 7 0 9 3.500 2.500 4 6 4.500 10 2" stroke="currentColor" strokeWidth="1.800" />
        </Icon>
      </button>
      <div className="flex-1" />
      <button aria-label="锁定">
        <Icon w={14} h={14}>
          <path d="M8.500 7V3.800a2.500 2.500 0 0 1 5 0V6" stroke="currentColor" strokeWidth="1.300" />
          <path d="M0 7h11v7H0z" fill="currentColor" />
          <path d="M5 9h1.500v3H5z" fill="#242424" />
        </Icon>
      </button>
    </div>
  );
}

function AnimationPanel() {
  return (
    <section className="flex h-[179px] shrink-0 flex-col">
      <DockTab icon={<AnimIcon />} label="动画" width="w-[160px]" />
      <div className="flex min-h-0 flex-1">
        <div className="flex w-[229px] shrink-0 flex-col bg-[#242424] pl-0.5">
          <div className="flex h-[29px] shrink-0 items-center gap-[3px] pl-0.5">
            <button className="flex h-6 w-[77px] items-center justify-center gap-1 rounded-[3px] border border-[#0f0f0f] bg-[#383838] text-white">
              <Plus />
              动画
            </button>
            <SearchBox id="anim-search" label="搜索动画" className="w-[141px]" />
          </div>
          <div className="flex-1 bg-[#1a1a1a]" />
        </div>
        <div className="w-[5px] shrink-0" />
        <div className="relative flex min-w-0 flex-1 flex-col">
          <SequencerBar />
          <div className="flex min-h-0 flex-1 bg-[#242424] pr-0.5">
            <div className="flex w-[386px] shrink-0 flex-col">
              <div className="flex h-[31px] shrink-0 items-center pl-1.5">
                <button className="flex h-6 w-[73px] items-center justify-center gap-1 rounded-[3px] border border-[#1a1a1a] bg-[#343434] text-[#858585]">
                  <Plus className="opacity-60" />
                  轨道
                </button>
                <SearchBox id="track-search" label="搜索轨道" dim className="ml-[3px] w-[166px]" />
                <button aria-label="筛选" className="ml-1 text-[#8a8a8a]">
                  <Icon w={15} h={13}>
                    <path d="M0 1h15M3 6.500h9M5.500 12h4" stroke="currentColor" strokeWidth="2" />
                  </Icon>
                </button>
                <span className="ml-4 w-[49px] text-[#83511b]">0.00</span>
                <span className="whitespace-nowrap text-[#83511b]">1 of 100</span>
              </div>
              <div className="flex-1 bg-[#1f1f1f]" />
            </div>
            <div className="w-1 shrink-0 bg-[#1d1d1d]" />
            <div className="min-w-0 flex-1">
              <Timeline />
            </div>
          </div>
          <p className="pointer-events-none absolute inset-x-0 bottom-[6px] pr-1 text-center text-[24px] leading-8 text-[#c8c8c8] [text-shadow:1px_1px_2px_#000]">
            未选中动画
          </p>
          <p className="pointer-events-none absolute right-[9px] bottom-1 text-[20px] leading-8 text-[#b8b8b8] [text-shadow:1px_1px_1px_#000]">
            CSDN @[小瓜偷学编程]
          </p>
        </div>
      </div>
    </section>
  );
}

export default function App() {
  return (
    <div className="flex h-screen flex-col overflow-hidden border-x-2 border-[#2b2b2b] bg-[#151515] text-[13px] leading-[18px] font-[Roboto,'Noto_Sans_CJK_SC',sans-serif]">
      <TitleBar />
      <ToolBar />
      <main className="flex min-h-0 flex-1 gap-[5px] pt-1 pr-[3px] pl-1">
        <div className="flex w-[323px] shrink-0 flex-col gap-[5px]">
          <PalettePanel />
          <HierarchyPanel />
        </div>
        <div className="flex min-w-0 flex-1 flex-col gap-[5px]">
          <div className="flex min-h-0 flex-1 gap-[5px]">
            <Viewport />
            <DetailsPanel />
          </div>
          <AnimationPanel />
        </div>
      </main>
    </div>
  );
}
